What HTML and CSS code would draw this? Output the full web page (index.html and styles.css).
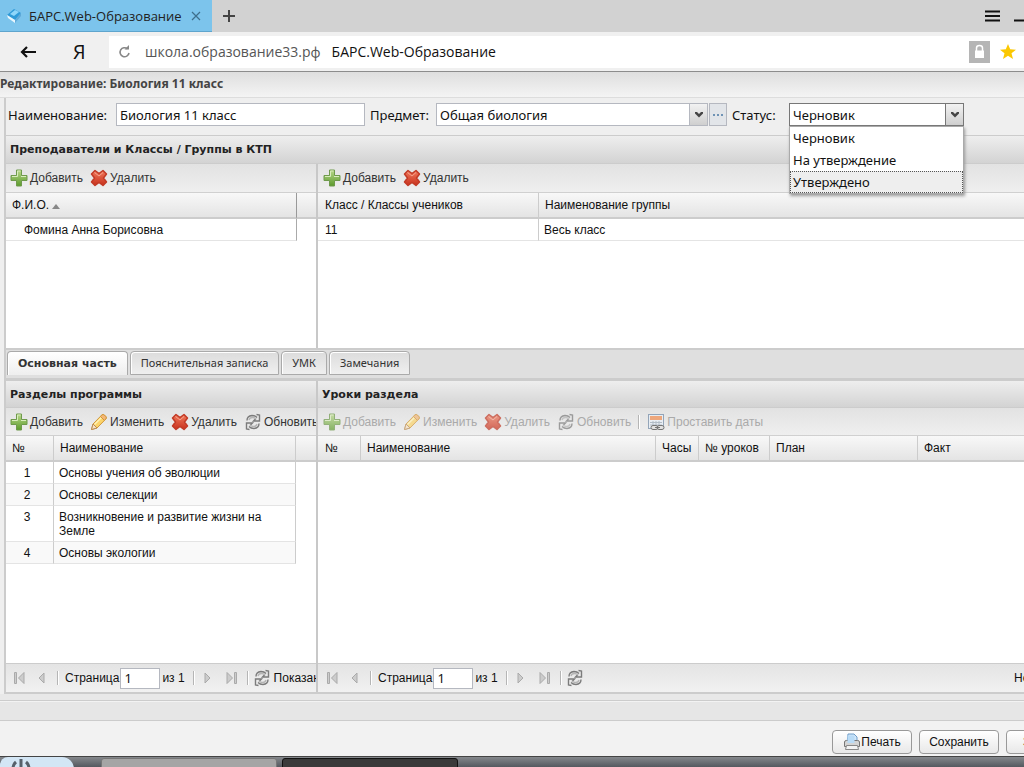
FILE: index.html
```html
<!DOCTYPE html>
<html lang="ru">
<head>
    <meta charset="UTF-8">
    <meta name="viewport" content="width=device-width, initial-scale=1.0">
    <title>БАРС.Web-Образование</title>
    <link rel="stylesheet" href="styles.css">
</head>
<body>
<svg class="sprite" aria-hidden="true">
    <defs>
        <linearGradient id="gGreen" x1="0" y1="0" x2="0" y2="1">
            <stop offset="0" stop-color="#b9d98a"/><stop offset="1" stop-color="#5c9a2c"/>
        </linearGradient>
        <linearGradient id="gRed" x1="0" y1="0" x2="0" y2="1">
            <stop offset="0" stop-color="#f07a5c"/><stop offset="1" stop-color="#c8301c"/>
        </linearGradient>
    </defs>
    <symbol id="add" viewBox="0 0 18 18">
        <path d="M6.500 1h5v5.500H17v5h-5.500V17h-5v-5.500H1v-5h5.500z" fill="url(#gGreen)" stroke="#6f9a4c"/>
        <path d="M7.500 7.500V2h3M2 7.500h5.500M11 7.500h5" fill="none" stroke="#d9ecbd"/>
    </symbol>
    <symbol id="del" viewBox="0 0 18 18">
        <path d="M5 1.500L9 4.500l4-3 3.500 3.500L13.500 9l3 4-3.500 3.500L9 13.500l-4 3L1.500 13l3-4-3-4z" fill="url(#gRed)" stroke="#c23a26" stroke-width="1.500" stroke-linejoin="round"/>
        <path d="M4.500 3.500L9 7l4-3.500" fill="none" stroke="#f7a38d"/>
    </symbol>
    <symbol id="edit" viewBox="0 0 18 18">
        <path d="M1.500 16.500l1.500-5.500L12 1.800q1.200-.8 2.500.4l1.200 1.200q1.200 1.300.2 2.500L7 15z" fill="#fbd46b" stroke="#d1973a"/>
        <path d="M4.500 11.500l8-8" stroke="#fff2b8" stroke-width="1.500"/>
        <path d="M3 11l4 4-5.500 1.500z" fill="#f6e2c4" stroke="#b98a55"/>
        <path d="M12 1.800q1.200-.8 2.500.4l1.200 1.200q1.200 1.300.2 2.500l-1.500 1.500-4-4z" fill="#f3b778" stroke="#d1973a"/>
    </symbol>
    <symbol id="refresh" viewBox="0 0 18 18">
        <path d="M3 7.500Q3 3 8 2.500q3 0 5 2M12.500 1.500L15.500 2v6H9.500l2.500-2.500" fill="none" stroke="#7b7b7b" stroke-width="1.400"/>
        <path d="M15 10.500q0 4.500-5 5-3 0-5-2M5.500 16.500l-3-.5v-6h6L6 12.500" fill="none" stroke="#7b7b7b" stroke-width="1.400"/>
        <path d="M5 7q.5-2.500 3.500-2.500 2 0 3.500 1.500M13 11q-.5 2.500-3.500 2.500-2 0-3.500-1.500" fill="none" stroke="#b5b5b5" stroke-width="1.400"/>
    </symbol>
    <symbol id="dates" viewBox="0 0 18 18">
        <rect x="1.500" y="1.500" width="15" height="14" fill="#e8f0f8" stroke="#7089a5"/>
        <rect x="3" y="3" width="12" height="4" fill="#f08c50"/>
        <path d="M3 9.500h12M3 12h12M6 8v6M9 8v6M12 8v6" stroke="#9aa9b8"/>
        <path d="M6 12.500h3a2 2 0 0 1 0 4H6a2 2 0 0 1 0-4zm6 0h3a2 2 0 0 1 0 4h-3a2 2 0 0 1 0-4z" fill="#ddd" stroke="#444"/>
        <path d="M8 14.500h5" stroke="#444"/>
    </symbol>
    <symbol id="first" viewBox="0 0 14 14"><path d="M1.500 1.500h2v11h-2zM11 1.500v11L5.500 7z" fill="#ccc" stroke="#aaa"/></symbol>
    <symbol id="prev" viewBox="0 0 14 14"><path d="M9 2v10L4 7z" fill="#ccc" stroke="#aaa"/></symbol>
    <symbol id="next" viewBox="0 0 14 14"><path d="M2 2v10l5-5z" fill="#ccc" stroke="#aaa"/></symbol>
    <symbol id="last" viewBox="0 0 14 14"><path d="M9.500 1.500h2v11h-2zM2 1.500v11L7.500 7z" fill="#ccc" stroke="#aaa"/></symbol>
    <symbol id="down" viewBox="0 0 10 8"><path d="M1 1h2l2 2 2-2h2v1.500L5 6.500 1 2.500z" fill="#444"/></symbol>
</svg>

<div class="page">
    <header class="tabstrip">
        <a class="browser-tab" href="#">
            <svg width="16" height="16" viewBox="0 0 16 16"><path d="M1 7l7-6 7 4-6 7z" fill="#2f9ad8"/><path d="M4 6l5-4 4 2-5 4z" fill="#8fd6fa"/><path d="M1 7l8 5v3L2 10z" fill="#e9f6fd"/><path d="M9 12l6-7v3l-6 7z" fill="#5fa9d8"/></svg>
            <span>БАРС.Web-Образование</span>
            <svg class="tab-close" width="10" height="10" viewBox="0 0 10 10"><path d="M1 1l8 8M9 1L1 9" stroke="#3e6f8c" stroke-width="1.200"/></svg>
        </a>
        <button class="plain" aria-label="Новая вкладка"><svg width="14" height="14" viewBox="0 0 14 14"><path d="M7 1v12M1 7h12" stroke="#444" stroke-width="2"/></svg></button>
        <div class="window-buttons">
            <button class="plain" aria-label="Меню"><svg width="16" height="12" viewBox="0 0 16 12"><path d="M0 1.500h15M0 6h15M0 10.500h15" stroke="#111" stroke-width="2"/></svg></button>
            <button class="plain minimize" aria-label="Свернуть"><svg width="16" height="12" viewBox="0 0 16 12"><path d="M0 10.500h16" stroke="#111" stroke-width="2"/></svg></button>
        </div>
    </header>

    <nav class="addressbar">
        <button class="plain back" aria-label="Назад"><svg width="17" height="14" viewBox="0 0 17 14"><path d="M7 2L2 7l5 5M2 7h14" fill="none" stroke="#111" stroke-width="2.200"/></svg></button>
        <a class="yandex" href="#">Я</a>
        <div class="address">
            <svg width="13" height="14" viewBox="0 0 13 14"><path d="M9.500 3.800A4.500 4.500 0 1 0 11 8" fill="none" stroke="#888" stroke-width="1.600"/><path d="M6.500 4.500H11V0z" fill="#888"/></svg>
            <span class="host">школа.образование33.рф</span>
            <span>БАРС.Web-Образование</span>
            <svg class="lock" width="21" height="22" viewBox="0 0 21 22"><path d="M0 0h21v22H0z" fill="#b5b5b5"/><path d="M7.500 10V7q0-2.500 3-2.500t3 2.500v3" fill="none" stroke="#fff" stroke-width="1.500"/><path d="M6 9.500h9V17H6z" fill="#fff"/></svg>
            <svg width="16" height="15" viewBox="0 0 16 15"><path d="M8 0l2.200 5.300L16 5.700l-4.500 3.600L13 15l-5-3.200L3 15l1.500-5.700L0 5.700l5.800-.4z" fill="#fbc802"/></svg>
        </div>
    </nav>

    <h1 class="window-title">Редактирование: Биология 11 класс</h1>

    <main class="window">
        <form class="form">
            <label class="label-name" for="name">Наименование:</label>
            <input class="field name" id="name" type="text" value="Биология 11 класс">
            <label class="label-subject" for="subject">Предмет:</label>
            <div class="combo subject">
                <input class="field" id="subject" type="text" value="Общая биология">
                <button class="trigger" type="button" aria-label="Открыть список"><svg width="10" height="8"><use href="#down"/></svg></button>
                <button class="trigger dots" type="button" aria-label="Выбрать"><svg width="12" height="4" viewBox="0 0 12 4"><path d="M1 1h2v2H1zM5 1h2v2H5zM9 1h2v2H9z" fill="#6f93b5"/></svg></button>
            </div>
            <label class="label-status" for="status">Статус:</label>
            <div class="combo status">
                <select class="field" id="status">
                    <option>Черновик</option>
                    <option>На утверждение</option>
                    <option>Утверждено</option>
                </select>
                <span class="trigger"><svg width="10" height="8"><use href="#down"/></svg></span>
                <ul class="options">
                    <li>Черновик</li>
                    <li>На утверждение</li>
                    <li class="active">Утверждено</li>
                </ul>
            </div>
        </form>

        <section class="panel top">
            <h2 class="panel-title">Преподаватели и Классы / Группы в КТП</h2>
            <div class="split">
                <div class="side">
                    <div class="toolbar">
                        <button class="tool"><svg><use href="#add"/></svg>Добавить</button>
                        <button class="tool"><svg><use href="#del"/></svg>Удалить</button>
                    </div>
                    <table class="grid">
                        <colgroup><col class="w-teacher"><col></colgroup>
                        <thead><tr><th class="sorted">Ф.И.О. <svg width="8" height="5" viewBox="0 0 8 5"><path d="M4 0l4 5H0z" fill="#888"/></svg></th><th></th></tr></thead>
                        <tbody><tr><td class="indent">Фомина Анна Борисовна</td></tr></tbody>
                    </table>
                </div>
                <div class="rest">
                    <div class="toolbar">
                        <button class="tool"><svg><use href="#add"/></svg>Добавить</button>
                        <button class="tool"><svg><use href="#del"/></svg>Удалить</button>
                    </div>
                    <table class="grid">
                        <colgroup><col class="w-class"><col></colgroup>
                        <thead><tr><th>Класс / Классы учеников</th><th>Наименование группы</th></tr></thead>
                        <tbody><tr><td>11</td><td>Весь класс</td></tr></tbody>
                    </table>
                </div>
            </div>
        </section>

        <nav class="tabs">
            <button class="tab active">Основная часть</button>
            <button class="tab">Пояснительная записка</button>
            <button class="tab">УМК</button>
            <button class="tab">Замечания</button>
        </nav>

        <section class="panel bottom">
            <div class="split">
                <div class="side">
                    <h2 class="panel-title">Разделы программы</h2>
                    <div class="toolbar">
                        <button class="tool"><svg><use href="#add"/></svg>Добавить</button>
                        <button class="tool"><svg><use href="#edit"/></svg>Изменить</button>
                        <button class="tool"><svg><use href="#del"/></svg>Удалить</button>
                        <button class="tool"><svg><use href="#refresh"/></svg>Обновить</button>
                    </div>
                    <table class="grid striped">
                        <colgroup><col class="w-num"><col class="w-section"><col></colgroup>
                        <thead><tr><th>№</th><th>Наименование</th><th></th></tr></thead>
                        <tbody>
                            <tr><td class="num">1</td><td>Основы учения об эволюции</td></tr>
                            <tr><td class="num">2</td><td>Основы селекции</td></tr>
                            <tr><td class="num">3</td><td>Возникновение и развитие жизни на Земле</td></tr>
                            <tr><td class="num">4</td><td>Основы экологии</td></tr>
                        </tbody>
                    </table>
                    <div class="pager">
                        <button class="plain" aria-label="Первая"><svg><use href="#first"/></svg></button>
                        <button class="plain" aria-label="Назад"><svg><use href="#prev"/></svg></button>
                        <i class="sep"></i>
                        <label for="page1">Страница</label>
                        <input class="field" id="page1" type="text" value="1">
                        <span>из 1</span>
                        <i class="sep"></i>
                        <button class="plain" aria-label="Вперёд"><svg><use href="#next"/></svg></button>
                        <button class="plain" aria-label="Последняя"><svg><use href="#last"/></svg></button>
                        <i class="sep"></i>
                        <button class="plain reload" aria-label="Обновить"><svg><use href="#refresh"/></svg></button>
                        <span class="shown">Показано 1 - 4 из 4</span>
                    </div>
                </div>
                <div class="rest">
                    <h2 class="panel-title">Уроки раздела</h2>
                    <div class="toolbar">
                        <button class="tool" disabled><svg><use href="#add"/></svg>Добавить</button>
                        <button class="tool" disabled><svg><use href="#edit"/></svg>Изменить</button>
                        <button class="tool" disabled><svg><use href="#del"/></svg>Удалить</button>
                        <button class="tool" disabled><svg><use href="#refresh"/></svg>Обновить</button>
                        <i class="sep"></i>
                        <button class="tool" disabled><svg><use href="#dates"/></svg>Проставить даты</button>
                    </div>
                    <table class="grid">
                        <colgroup><col class="w-no"><col><col class="w-hours"><col class="w-lessons"><col class="w-plan"><col class="w-fact"></colgroup>
                        <thead><tr><th>№</th><th>Наименование</th><th>Часы</th><th>№ уроков</th><th>План</th><th>Факт</th></tr></thead>
                    </table>
                    <div class="pager">
                        <button class="plain" aria-label="Первая"><svg><use href="#first"/></svg></button>
                        <button class="plain" aria-label="Назад"><svg><use href="#prev"/></svg></button>
                        <i class="sep"></i>
                        <label for="page2">Страница</label>
                        <input class="field" id="page2" type="text" value="1">
                        <span>из 1</span>
                        <i class="sep"></i>
                        <button class="plain" aria-label="Вперёд"><svg><use href="#next"/></svg></button>
                        <button class="plain" aria-label="Последняя"><svg><use href="#last"/></svg></button>
                        <i class="sep"></i>
                        <button class="plain reload" aria-label="Обновить"><svg><use href="#refresh"/></svg></button>
                        <span class="empty">Нет данных</span>
                    </div>
                </div>
            </div>
        </section>
    </main>

    <div class="strip"></div>
    <footer class="buttons">
        <button class="btn"><svg width="18" height="18" viewBox="0 0 18 18"><path d="M5 1h6l3 3v6H4z" fill="#cfe6fa" stroke="#6f9cc8"/><path d="M1.500 9q0-1.500 2-1.500h11q2 0 2 1.500v4.500h-15z" fill="#d4d4d4" stroke="#777"/><path d="M4.500 2.500h7V10h-7z" fill="#b9dbf6"/><path d="M3.500 12.500h11l1 4h-13z" fill="#f3f3f3" stroke="#888"/></svg>Печать</button>
        <button class="btn">Сохранить</button>
        <button class="btn cut">Закрыть</button>
    </footer>
    <div class="taskbar">
        <button class="start" aria-label="Пуск"><svg width="24" height="16" viewBox="0 0 24 16"><path d="M7 4a8 8 0 1 0 10 0" fill="none" stroke="#56606a" stroke-width="3"/><path d="M12 1v12" stroke="#56606a" stroke-width="3"/></svg></button>
        <button class="task" aria-label="Окно 1"></button>
        <button class="task dark" aria-label="Окно 2"></button>
    </div>
</div>
</body>
</html>
```
FILE: styles.css
```css
* {
    box-sizing: border-box;
}
body {
    margin: 0;
    overflow: hidden;
    font: 12px/14px "Liberation Sans", Arial, sans-serif;
    color: #111;
    background: #efefef;
}
ul, h1, h2 {
    margin: 0;
    padding: 0;
    list-style: none;
}
button, input, select {
    margin: 0;
    font: inherit;
    color: inherit;
}
svg {
    flex: none;
}
.sprite {
    position: absolute;
    width: 0;
    height: 0;
}
.plain {
    display: flex;
    flex: none;
    padding: 0;
    border: 0;
    background: none;
}
.page {
    display: flex;
    flex-direction: column;
    height: 100vh;
    overflow: hidden;
}

/* browser */
.tabstrip {
    display: flex;
    align-items: center;
    flex: none;
    height: 32px;
    background: #d2d2d2;
}
.browser-tab {
    display: flex;
    align-items: center;
    gap: 7px;
    width: 212px;
    height: 32px;
    margin-right: 10px;
    padding-left: 6px;
    border-bottom: 1px solid #5fa5cd;
    background: #7cc4ec;
    color: #222;
    font: 13px/20px "Open Sans", sans-serif;
    text-decoration: none;
    white-space: nowrap;
}
.tab-close {
    margin-left: 2px;
}
.window-buttons {
    display: flex;
    gap: 13px;
    margin-left: auto;
}
.minimize {
    width: 10px;
}
.addressbar {
    display: flex;
    align-items: center;
    flex: none;
    height: 40px;
    padding-left: 20px;
    border-bottom: 1px solid #8c8c8c;
    background: #f0f0f0;
}
.yandex {
    width: 72px;
    padding-left: 36px;
    color: #111;
    font: 20px/24px "Open Sans", sans-serif;
    text-decoration: none;
}
.address {
    display: flex;
    align-items: center;
    flex: 1;
    height: 32px;
    padding: 0 8px 0 9px;
    background: #fff;
    font: 14px/20px "Open Sans", sans-serif;
    white-space: nowrap;
}
.host {
    margin: 0 11px 0 14px;
    color: #555;
}
.lock {
    margin: 0 10px 0 auto;
}

/* window */
.window-title {
    flex: none;
    height: 26px;
    border-bottom: 1px solid #ddd;
    background: linear-gradient(#dedede, #f4f4f4);
    color: #444;
    font: bold 12px/24px "Noto Sans", Tahoma, sans-serif;
}
.window {
    display: flex;
    flex-direction: column;
    flex: 1;
    min-height: 0;
    margin-left: 4px;
    border-left: 2px solid #ccc;
    border-bottom: 2px solid #ccc;
}
.form {
    display: flex;
    align-items: center;
    flex: none;
    height: 37px;
    padding-bottom: 4px;
    font: 13px/20px "Noto Sans", Tahoma, sans-serif;
    white-space: nowrap;
}
.label-name {
    width: 110px;
    padding-left: 2px;
}
.label-subject {
    width: 71px;
    padding-left: 5px;
}
.label-status {
    width: 62px;
    padding-left: 5px;
}
.field {
    height: 23px;
    min-width: 0;
    padding: 0 3px;
    border: 1px solid #b5b8c0;
    border-radius: 0;
    background: #fff;
    appearance: none;
    outline: 0;
}
.name {
    width: 249px;
}
.combo {
    position: relative;
    display: flex;
}
.combo .field {
    flex: 1;
}
.subject {
    width: 291px;
}
.status {
    width: 175px;
}
.status .field, .status .trigger {
    border-color: #777;
}
.trigger {
    display: flex;
    align-items: center;
    justify-content: center;
    width: 18px;
    height: 23px;
    padding: 0;
    border: 1px solid #b5b8c0;
    border-left: 0;
    background: linear-gradient(#f2f2f2, #cfcfcf);
}
.dots {
    margin-left: 1px;
    border-left: 1px solid #b5b8c0;
    background: #e2e5e9;
}
.options {
    position: absolute;
    z-index: 1;
    top: 23px;
    left: 0;
    width: 100%;
    border: 1px solid #aaa;
    background: #fff;
    box-shadow: 1px 2px 3px #999;
}
.options li {
    height: 22px;
    padding: 0 2px;
    border: 1px solid transparent;
}
.options .active {
    border: 1px dotted #555;
    background: #eee;
}
.panel {
    display: flex;
    flex-direction: column;
    border-top: 1px solid #ccc;
}
.top {
    flex: none;
    height: 213px;
}
.bottom {
    flex: 1;
    min-height: 0;
}
.panel-title {
    flex: none;
    height: 28px;
    padding-left: 4px;
    border-bottom: 1px solid #ccc;
    background: linear-gradient(#eee, #d3d3d3);
    color: #222;
    font: bold 11px/28px "DejaVu Sans", Verdana, sans-serif;
    white-space: nowrap;
}
.bottom .panel-title {
    height: 27px;
}
.split {
    display: flex;
    flex: 1;
    min-height: 0;
}
.side, .rest {
    display: flex;
    flex-direction: column;
    overflow: hidden;
    background: #fff;
}
.side {
    flex: none;
    width: 312px;
    border-right: 2px solid #c8c8c8;
}
.rest {
    flex: 1;
}
.toolbar {
    display: flex;
    align-items: center;
    gap: 7px;
    flex: none;
    height: 29px;
    padding-left: 4px;
    border-bottom: 1px solid #d0d0d0;
    background: linear-gradient(#e2e2e2, #efefef);
}
.bottom .toolbar {
    height: 28px;
}
.rest .toolbar {
    padding-left: 5px;
}
.tool {
    display: flex;
    align-items: center;
    gap: 2px;
    flex: none;
    padding: 0;
    border: 0;
    background: none;
    color: #333;
    white-space: nowrap;
}
.tool svg {
    width: 18px;
    height: 18px;
}
.tool:disabled {
    color: #aaa;
}
.tool:disabled svg {
    opacity: .7;
}
.sep {
    flex: none;
    width: 2px;
    height: 14px;
    border-left: 1px solid #b5b5b5;
    border-right: 1px solid #fff;
}

/* grids */
.grid {
    width: 100%;
    table-layout: fixed;
    border-spacing: 0;
}
.grid th {
    height: 26px;
    padding: 0 6px;
    border-right: 1px solid #ccc;
    border-bottom: 2px solid #ccc;
    background: linear-gradient(#f8f8f8, #e4e4e4);
    font-weight: normal;
    text-align: left;
    white-space: nowrap;
}
.grid th:last-child {
    border-right: 0;
}
.grid td {
    height: 22px;
    padding: 4px 5px 3px;
    border-right: 1px solid #ccc;
    border-bottom: 1px solid #e4e4e4;
    vertical-align: top;
}
.rest .grid th:first-child, .rest .grid td:first-child {
    padding-left: 7px;
}
.rest .grid td:last-child {
    border-right: 0;
}
.grid .sorted {
    border-right-color: #999;
}
.grid .indent {
    padding-left: 18px;
    border-right-color: #aaa;
}
.grid .num {
    padding-right: 10px;
    text-align: center;
}
.striped tr:nth-child(even) td {
    background: #f9f9f9;
}
.w-teacher {
    width: 291px;
}
.w-class {
    width: 221px;
}
.w-num {
    width: 48px;
}
.w-section {
    width: 242px;
}
.w-no {
    width: 43px;
}
.w-hours {
    width: 43px;
}
.w-lessons {
    width: 71px;
}
.w-plan {
    width: 148px;
}
.w-fact {
    width: 106px;
}
.tabs {
    display: flex;
    align-items: flex-end;
    gap: 2px;
    flex: none;
    height: 32px;
    padding: 0 1px 3px;
    border-top: 2px solid #ccc;
    border-bottom: 2px solid #ccc;
    background: #dfdfdf;
}
.tab {
    height: 24px;
    padding: 0 10px;
    border: 1px solid #aaa;
    border-radius: 4px 4px 0 0;
    background: linear-gradient(#dcdcdc, #efefef);
    box-shadow: inset 1px 1px #fff;
    color: #333;
    font: 11px/22px "Noto Sans", Tahoma, sans-serif;
    white-space: nowrap;
}
.tab.active {
    border-bottom: 0;
    background: linear-gradient(#fff, #eee);
    font: bold 11px/22px "DejaVu Sans", Verdana, sans-serif;
}

/* paging */
.pager {
    display: flex;
    align-items: center;
    flex: none;
    gap: 8px;
    height: 29px;
    margin-top: auto;
    padding-left: 7px;
    border-top: 1px solid #ccc;
    background: linear-gradient(#e4e4e4, #f1f1f1);
    white-space: nowrap;
}
.rest .pager {
    padding-left: 8px;
}
.pager svg {
    width: 14px;
    height: 14px;
}
.pager .reload {
    margin-left: -4px;
}
.pager .reload svg {
    width: 18px;
    height: 18px;
}
.pager label {
    margin: 0 -7px 0 -2px;
}
.pager .field {
    flex: none;
    width: 40px;
    height: 21px;
    margin-right: -6px;
    font: 13px/18px "Noto Sans", Tahoma, sans-serif;
}
.shown {
    margin-left: -5px;
}
.empty {
    width: 10px;
    margin-left: auto;
}
.strip {
    flex: none;
    height: 27px;
    border-bottom: 1px solid #ccc;
    background: linear-gradient(#e8e8e8 6px, #ccc 6px, #ccc 7px, #fff 7px, #e6e6e6 8px);
}
.buttons {
    display: flex;
    align-items: center;
    justify-content: flex-end;
    gap: 7px;
    flex: none;
    height: 35px;
    padding-top: 6px;
    background: #f2f2f2;
}
.btn {
    display: flex;
    align-items: center;
    justify-content: center;
    flex: none;
    width: 80px;
    height: 24px;
    padding: 0;
    border: 1px solid #999;
    border-radius: 4px;
    background: linear-gradient(#fff, #e8e8e8);
}
.cut {
    margin-right: -62px;
}
.taskbar {
    display: flex;
    flex: none;
    height: 11px;
    overflow: hidden;
    border-top: 1px solid #444;
    background: linear-gradient(#85888c, #54595f);
}
.start {
    width: 74px;
    height: 20px;
    margin-right: 27px;
    padding: 1px 0 0 9px;
    border: 0;
    border-radius: 8px 12px 0 0;
    background: #d3e6f5;
    text-align: left;
}
.task {
    width: 176px;
    height: 20px;
    margin: 1px 5px 0 0;
    border: 1px solid #777;
    border-radius: 3px;
    background: #a5a5a5;
}
.task.dark {
    border-color: #111;
    background: #3a3a3a;
}
```
